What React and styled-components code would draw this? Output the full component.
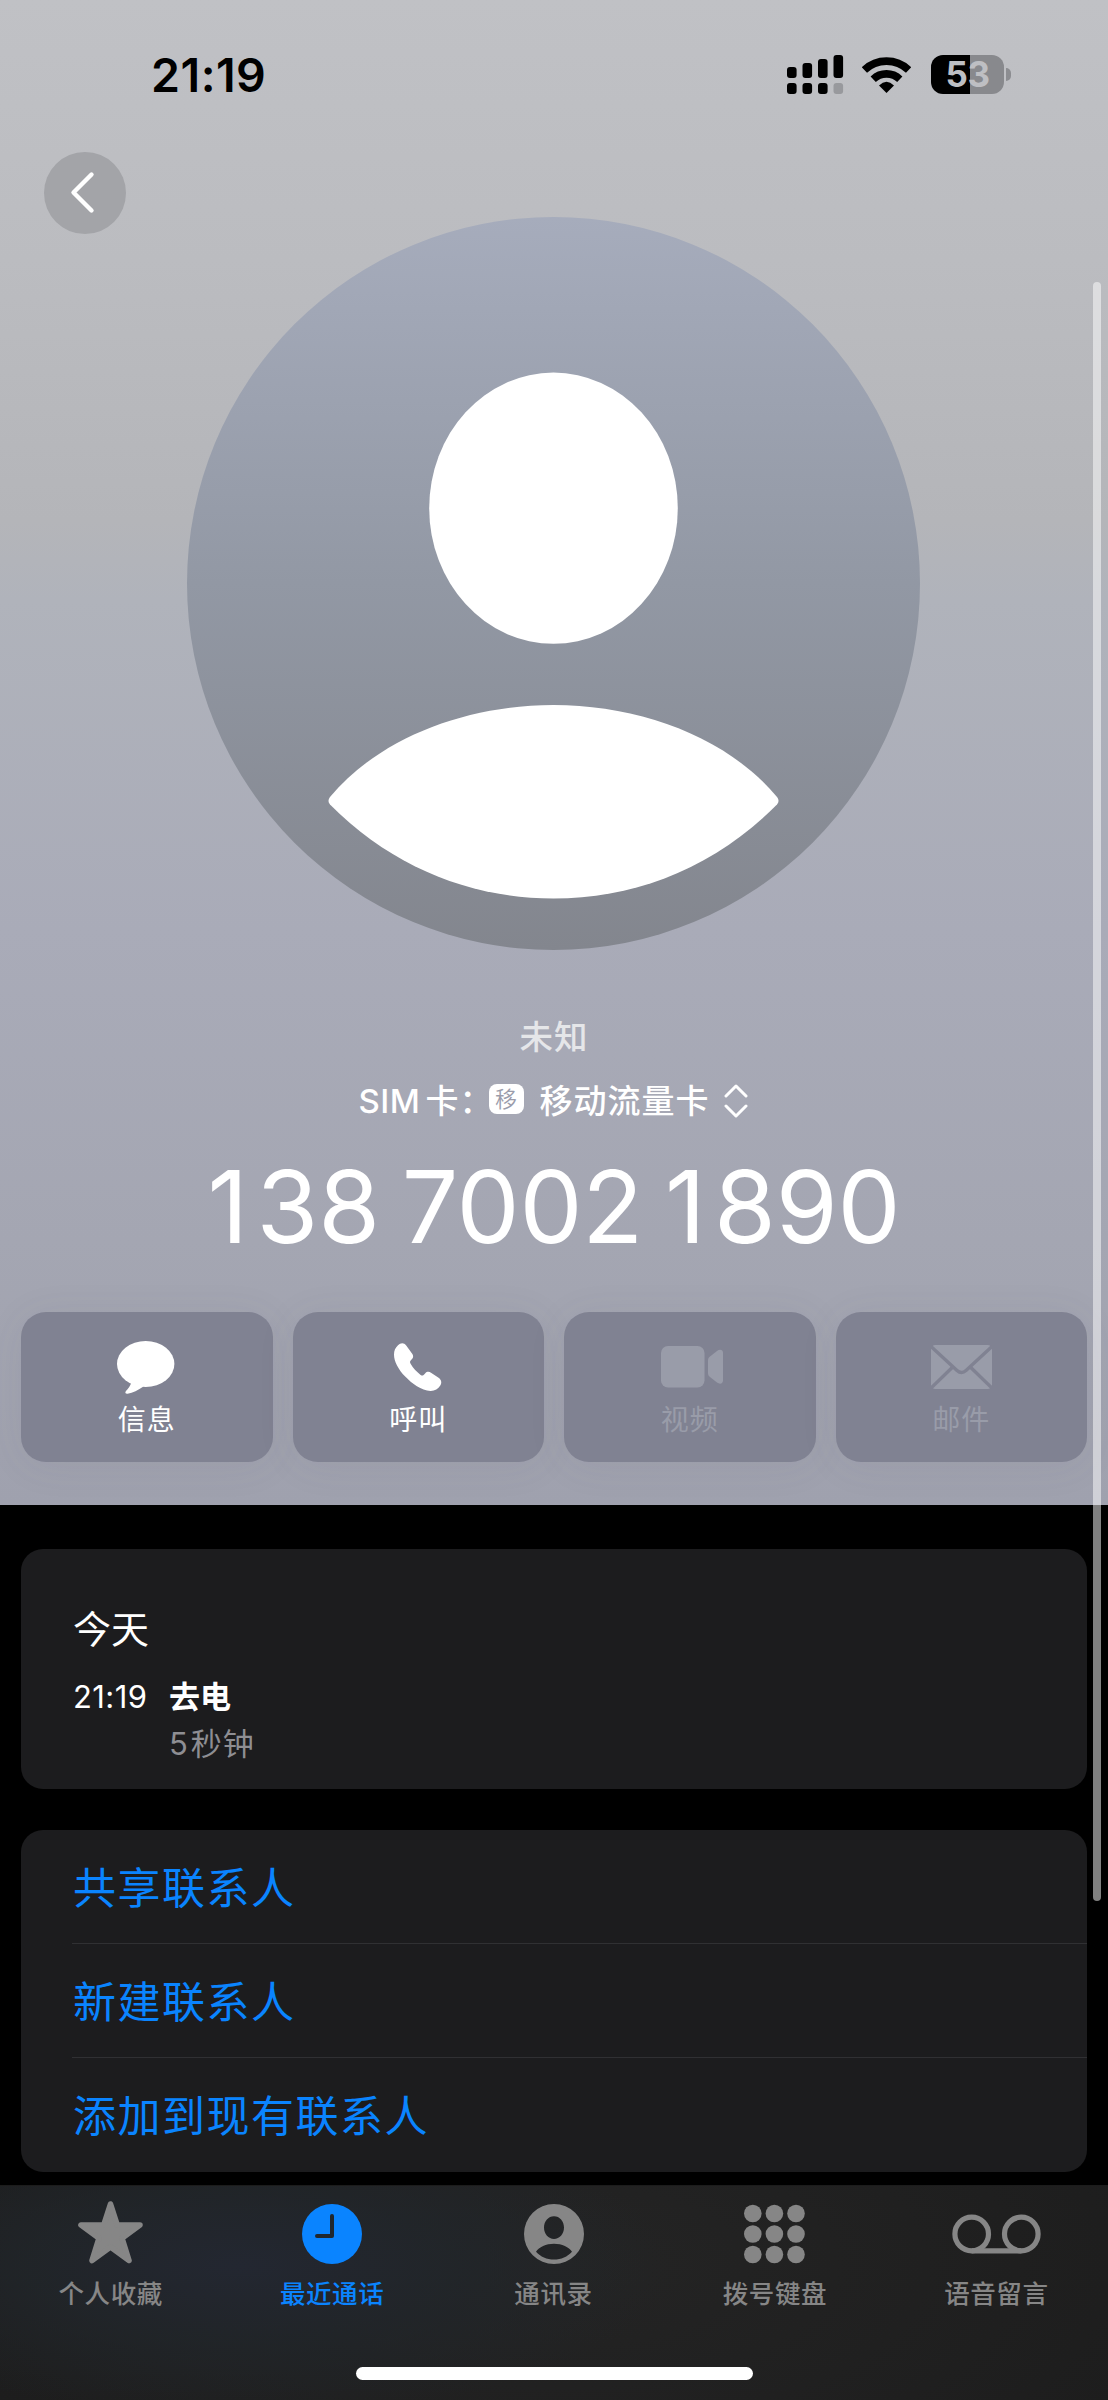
import React from 'react';
import styled, { createGlobalStyle } from 'styled-components';

const GlobalStyle = createGlobalStyle`
  * {
    box-sizing: border-box;
  }

  body {
    margin: 0;
    background: #000;
    font-family: Inter, 'Noto Sans CJK SC', sans-serif;
  }

  button {
    padding: 0;
    border: none;
    background: none;
    font-family: inherit;
    cursor: pointer;
  }

  svg {
    display: block;
    flex: none;
  }
`;

const Screen = styled.div`
  position: relative;
  display: flex;
  flex-direction: column;
  width: 1108px;
  height: 2400px;
  overflow: hidden;
  background: #000;
`;

const Hero = styled.header`
  display: flex;
  flex-direction: column;
  align-items: center;
  height: 1505px;
  background: linear-gradient(
    #c0c1c5 0px,
    #bbbcc0 260px,
    #b4b5b9 520px,
    #b0b3bb 600px,
    #a9abb8 930px,
    #a4a6b2 1240px,
    #9fa1ae 1505px
  );
`;

const StatusBar = styled.div`
  display: flex;
  justify-content: space-between;
  align-items: flex-start;
  width: 100%;
  height: 152px;
  padding: 54px 97px 0 151px;
`;

const Clock = styled.span`
  font-size: 46.5px;
  font-weight: 600;
  line-height: 42px;
  letter-spacing: 0.5px;
  color: #000;
`;

const StatusIcons = styled.div`
  display: flex;
  align-items: center;
  margin-top: 1px;
`;

const Battery = styled.div`
  display: flex;
  align-items: center;
  justify-content: center;
  width: 73px;
  height: 39px;
  margin-left: 20px;
  border-radius: 12px;
  background: linear-gradient(90deg, #000 53%, #88898d 53%);
  font-size: 35px;
  font-weight: 700;
  line-height: 39px;
  letter-spacing: -0.5px;
  color: #bebfc3;
`;

const BatteryCap = styled.span`
  width: 5px;
  height: 13px;
  margin-left: 2px;
  border-radius: 0 5px 5px 0;
  background: #8c8d91;
`;

const NavRow = styled.nav`
  display: flex;
  width: 100%;
  height: 82px;
  padding-left: 44px;
`;

const BackButton = styled.button`
  display: flex;
  align-items: center;
  justify-content: center;
  width: 82px;
  height: 82px;
  padding-right: 6px;
  border-radius: 50%;
  background: #a3a4a8;
`;

const Avatar = styled.div`
  width: 733px;
  height: 733px;
  margin: -17px 1px 0 0;
  border-radius: 50%;
  background: linear-gradient(#a6acbc, #9298a4 50%, #83868e);
`;

const Caption = styled.div`
  height: 40px;
  margin-top: 67px;
  font-size: 33.5px;
  font-weight: 500;
  line-height: 40px;
  letter-spacing: 1px;
  color: #e5e6e9;
`;

const SimRow = styled.div`
  display: flex;
  align-items: center;
  height: 40px;
  margin: 24px 2px 0 0;
  font-size: 33px;
  font-weight: 500;
  line-height: 40px;
  letter-spacing: 1px;
  color: #fff;
`;

const SimLabel = styled.span`
  width: 130px;
  white-space: nowrap;
`;

const SimPrefix = styled.span`
  margin-right: 5px;
  font-weight: 550;
  letter-spacing: 0.5px;
`;

const SimBadge = styled.span`
  display: flex;
  align-items: center;
  justify-content: center;
  width: 35px;
  height: 30px;
  margin: -4px 16px 0 0;
  border-radius: 8px;
  background: #fff;
  font-size: 22px;
  font-weight: 350;
  line-height: 30px;
  letter-spacing: 0;
  color: #9a9cab;
`;

const SimName = styled.span`
  width: 184px;
  white-space: nowrap;
`;

const PhoneNumber = styled.h1`
  height: 110px;
  margin: 31px 0 0;
  font-size: 100px;
  font-weight: 400;
  line-height: 110px;
  letter-spacing: -0.2px;
  word-spacing: -6px;
  white-space: nowrap;
  color: #fff;
`;

const One = styled.span`
  margin-right: 8.5px;
`;

const Actions = styled.div`
  display: flex;
  gap: 20px;
  width: 100%;
  margin-top: 50px;
  padding: 0 21px;
`;

const ActionButton = styled.button`
  display: flex;
  flex: 1;
  flex-direction: column;
  align-items: center;
  height: 150px;
  border-radius: 25px;
  background: #808292;
  box-shadow: 0 4px 40px rgba(80, 82, 100, 0.07);
  color: ${({ $disabled }) => ($disabled ? '#999ca9' : '#fff')};
`;

const ActionIcon = styled.span`
  display: flex;
  align-items: center;
  justify-content: center;
  height: 64px;
  margin-top: 23px;
`;

const ActionLabel = styled.span`
  margin-top: 1px;
  font-size: 28px;
  font-weight: 400;
  line-height: 40px;
  letter-spacing: 1px;
`;

const Content = styled.main`
  display: flex;
  flex-direction: column;
  gap: 41px;
  height: 680px;
  padding: 44px 21px 0;
`;

const Card = styled.section`
  border-radius: 22px;
  background: #1c1c1e;
  color: #fff;
`;

const HistoryCard = styled(Card)`
  height: 240px;
  padding: 55px 52px 0;
`;

const DayTitle = styled.h2`
  margin: 0;
  font-size: 38px;
  font-weight: 400;
  line-height: 50px;
`;

const CallGrid = styled.div`
  display: grid;
  grid-template-columns: 96px auto;
  margin-top: 19px;
  font-size: 31px;
  line-height: 47px;
`;

const CallTime = styled.span`
  letter-spacing: 0.4px;
`;

const CallType = styled.span`
  font-weight: 700;
`;

const CallDuration = styled.span`
  grid-column: 2;
  letter-spacing: 1px;
  color: #8e8e93;
`;

const Seconds = styled.span`
  margin-right: 2px;
`;

const LinkRow = styled.button`
  display: block;
  width: calc(100% - 51px);
  height: 114px;
  margin-left: 51px;
  padding: 2px 0 0 1px;
  border-bottom: ${({ $last }) => ($last ? 'none' : '1.5px solid #303033')};
  font-size: 43px;
  line-height: 110px;
  letter-spacing: 1.5px;
  text-align: left;
  color: #0a84ff;
`;

const ScrollThumb = styled.div`
  position: absolute;
  top: 282px;
  right: 7px;
  width: 8px;
  height: 1619px;
  border-radius: 4px;
  background: rgba(255, 255, 255, 0.5);
`;

const Footer = styled.footer`
  display: flex;
  flex-direction: column;
  align-items: center;
  height: 215px;
  border-top: 1px solid #1c1c1c;
  background: radial-gradient(
      ellipse 430px 150px at 240px 80px,
      #232731 0%,
      rgba(33, 38, 43, 0.75) 50%,
      rgba(33, 33, 33, 0) 100%
    ),
    radial-gradient(ellipse 640px 280px at 560px 80px, #242424, #1d1d1d);
`;

const Tabs = styled.div`
  display: flex;
  width: 100%;
  height: 181px;
  padding-right: 1px;
`;

const Tab = styled.button`
  display: flex;
  flex: 1;
  flex-direction: column;
  align-items: center;
  color: ${({ $active }) => ($active ? '#0a84ff' : '#868686')};
`;

const TabIcon = styled.span`
  display: flex;
  align-items: center;
  justify-content: center;
  height: 66px;
  margin-top: 15px;
`;

const TabLabel = styled.span`
  margin-top: 8px;
  font-size: 25.5px;
  font-weight: 500;
  line-height: 38px;
  letter-spacing: 0.6px;
`;

const HomeIndicator = styled.div`
  width: 397px;
  height: 13px;
  border-radius: 7px;
  background: #fff;
`;

const SignalIcon = () => (
  <svg width="57" height="39" viewBox="0 0 57 39" fill="#000">
    <rect x="0" y="12" width="9.6" height="11" rx="3" />
    <rect x="15.5" y="8" width="9.6" height="15" rx="3" />
    <rect x="31" y="4" width="9.6" height="19" rx="3" />
    <rect x="46.5" y="0" width="9.6" height="23" rx="3" />
    <rect x="0" y="28" width="9.6" height="11" rx="3" />
    <rect x="15.5" y="28" width="9.6" height="11" rx="3" />
    <rect x="31" y="28" width="9.6" height="11" rx="3" />
    <rect x="46.5" y="28" width="9.6" height="11" rx="3" fill="#98999d" />
  </svg>
);

const Wifi = styled.svg`
  margin-left: 18px;
`;

const WifiIcon = () => (
  <Wifi
    width="49"
    height="36"
    viewBox="0 0 49 36"
    fill="none"
    stroke="#000"
    strokeWidth="7.6"
  >
    <path d="M2.4 13 A32 32 0 0 1 46.6 13" />
    <path d="M11.2 22.2 A19.4 19.4 0 0 1 37.8 22.2" />
    <path d="M24.5 36 L17 28.4 Q24.5 21 32 28.4 Z" fill="#000" stroke="none" />
  </Wifi>
);

const BackIcon = () => (
  <svg width="30" height="44" viewBox="0 0 30 44" fill="none">
    <path
      d="M24.5 3.5 L6.5 21.5 L24.5 39.5"
      stroke="#fff"
      strokeWidth="4.4"
      strokeLinecap="round"
      strokeLinejoin="round"
    />
  </svg>
);

const PersonFigure = () => (
  <svg width="733" height="733" viewBox="0 0 733 733" fill="#fff">
    <ellipse cx="366.5" cy="291.2" rx="124.3" ry="135.6" />
    <path d="M143 580 C193 520 280 488 366.5 488 C453 488 540 520 590 580 C592 583 592 585 590 587.5 C527 651 448 681.5 366.5 681.5 C285 681.5 206 651 143 587.5 C141 585 141 583 143 580 Z" />
  </svg>
);

const SelectorIcon = () => (
  <svg
    width="24"
    height="36"
    viewBox="0 0 24 36"
    fill="none"
    stroke="#fff"
    strokeWidth="3"
    strokeLinecap="round"
    strokeLinejoin="round"
  >
    <path d="M2 13 L12 3 L22 13" />
    <path d="M2 23 L12 33 L22 23" />
  </svg>
);

const MessageIcon = () => (
  <svg width="59" height="53" viewBox="0 0 59 53" fill="currentColor">
    <ellipse cx="28.7" cy="23" rx="28.7" ry="23" />
    <path d="M14.5 41 C13.4 45 11 48 9 50 C7.6 51.6 8.6 53 10.6 52.7 C16 52 21 49 26.5 45.5 Z" />
  </svg>
);

const CallIcon = () => (
  <svg width="49" height="48" viewBox="0 0 49 48" fill="currentColor">
    <path d="M4 2.2 C6.5 -.4 10 -.6 12.2 2.4 L18.2 10.8 C19.6 12.8 19.3 14.6 18 16 C15.8 18.2 15.6 19 16.6 20.8 C19 25 23 29.3 26.6 31.9 C28.4 33.2 29.2 32.8 31.3 30.3 C32.8 28.6 35 28.4 37 29.7 L44.6 34.8 C47.6 36.9 47.9 40 46.3 42.6 C44.2 46 40.7 48 36.5 47.9 C27.5 47.7 17.8 40.6 11.2 33.6 C4.4 26.4 0 18.4 0 11.4 C0 7.6 1.4 4.6 4 2.2 Z" />
  </svg>
);

const VideoIcon = () => (
  <svg width="58" height="42" viewBox="0 0 58 42" fill="currentColor" overflow="visible">
    <rect x="0" y="0" width="43.5" height="41.5" rx="7" />
    <path d="M47 14.5 C47 12.6 47.8 11.6 49 10.6 L56 5 C59 2.8 62 4 62 7 V34.5 C62 37.5 59 38.7 56 36.5 L49 31 C47.8 30 47 29 47 27 Z" />
  </svg>
);

const MailIcon = () => (
  <svg width="61" height="44" viewBox="0 0 61 44" fill="currentColor">
    <rect x="0" y="0" width="61" height="44" rx="4.5" />
    <g fill="none" stroke="#808292" strokeWidth="3.4">
      <path d="M0 1.5 L26 25.5 Q30.5 29.5 35 25.5 L61 1.5" />
      <path d="M0 43 L22 21.8" />
      <path d="M61 43 L39 21.8" />
    </g>
  </svg>
);

const StarIcon = () => (
  <svg width="65" height="66" viewBox="0 0 65 66">
    <path
      d="M32.5 3 L39.3 24 L62 24 L44 37.2 L51 59.5 L32.5 46 L14 59.5 L21 37.2 L3 24 L25.7 24 Z"
      fill="currentColor"
      stroke="currentColor"
      strokeWidth="5.6"
      strokeLinejoin="round"
    />
  </svg>
);

const RecentIcon = () => (
  <svg width="60" height="60" viewBox="0 0 60 60">
    <circle cx="30" cy="30" r="30" fill="currentColor" />
    <path
      d="M30 12 V32 H15"
      fill="none"
      stroke="#20272e"
      strokeWidth="4"
      strokeLinecap="round"
      strokeLinejoin="round"
    />
  </svg>
);

const ContactIcon = () => (
  <svg width="60" height="60" viewBox="0 0 60 60">
    <path
      fill="currentColor"
      fillRule="evenodd"
      d="M30 0 A30 30 0 1 1 30 60 A30 30 0 1 1 30 0 Z M30 12.3 C24.3 12.3 20 17.2 20 23.6 C20 30.2 24.5 35 30 35 C35.5 35 40 30.2 40 23.6 C40 17.2 35.7 12.3 30 12.3 Z M30 39.7 C22 39.7 15 43 12 47.7 C16.5 52.7 22.8 55.6 30 55.6 C37.2 55.6 43.5 52.7 48 47.7 C45 43 38 39.7 30 39.7 Z"
    />
  </svg>
);

const KeypadIcon = () => (
  <svg width="61" height="60" viewBox="0 0 61 60" fill="currentColor">
    {[9.5, 30, 50.5].map((cy) =>
      [8.8, 30.4, 52].map((cx) => (
        <circle key={`${cx}-${cy}`} cx={cx} cy={cy} r="8.8" />
      ))
    )}
  </svg>
);

const VoicemailIcon = () => (
  <svg
    width="89"
    height="40"
    viewBox="0 0 89 40"
    fill="none"
    stroke="currentColor"
    strokeWidth="5.2"
  >
    <circle cx="19.7" cy="20" r="16.8" />
    <circle cx="69.3" cy="20" r="16.8" />
    <path d="M19.7 36.8 H69.3" />
  </svg>
);

const actions = [
  { label: '信息', icon: <MessageIcon /> },
  { label: '呼叫', icon: <CallIcon /> },
  { label: '视频', icon: <VideoIcon />, disabled: true },
  { label: '邮件', icon: <MailIcon />, disabled: true },
];

const links = ['共享联系人', '新建联系人', '添加到现有联系人'];

const tabs = [
  { label: '个人收藏', icon: <StarIcon /> },
  { label: '最近通话', icon: <RecentIcon />, active: true },
  { label: '通讯录', icon: <ContactIcon /> },
  { label: '拨号键盘', icon: <KeypadIcon /> },
  { label: '语音留言', icon: <VoicemailIcon /> },
];

const App = () => {
  return (
    <Screen lang="zh-CN">
      <GlobalStyle />
      <Hero>
        <StatusBar>
          <Clock>21:19</Clock>
          <StatusIcons>
            <SignalIcon />
            <WifiIcon />
            <Battery>53</Battery>
            <BatteryCap />
          </StatusIcons>
        </StatusBar>
        <NavRow>
          <BackButton type="button">
            <BackIcon />
          </BackButton>
        </NavRow>
        <Avatar>
          <PersonFigure />
        </Avatar>
        <Caption>未知</Caption>
        <SimRow>
          <SimLabel>
            <SimPrefix>SIM</SimPrefix>卡：
          </SimLabel>
          <SimBadge>移</SimBadge>
          <SimName>移动流量卡</SimName>
          <SelectorIcon />
        </SimRow>
        <PhoneNumber>
          <One>1</One>38 7002 <One>1</One>890
        </PhoneNumber>
        <Actions>
          {actions.map(({ label, icon, disabled }) => (
            <ActionButton type="button" key={label} $disabled={disabled}>
              <ActionIcon>{icon}</ActionIcon>
              <ActionLabel>{label}</ActionLabel>
            </ActionButton>
          ))}
        </Actions>
      </Hero>
      <Content>
        <HistoryCard>
          <DayTitle>今天</DayTitle>
          <CallGrid>
            <CallTime>21:19</CallTime>
            <CallType>去电</CallType>
            <CallDuration>
              <Seconds>5</Seconds>秒钟
            </CallDuration>
          </CallGrid>
        </HistoryCard>
        <Card>
          {links.map((label, index) => (
            <LinkRow
              type="button"
              key={label}
              $last={index === links.length - 1}
            >
              {label}
            </LinkRow>
          ))}
        </Card>
      </Content>
      <Footer>
        <Tabs>
          {tabs.map(({ label, icon, active }) => (
            <Tab type="button" key={label} $active={active}>
              <TabIcon>{icon}</TabIcon>
              <TabLabel>{label}</TabLabel>
            </Tab>
          ))}
        </Tabs>
        <HomeIndicator />
      </Footer>
      <ScrollThumb />
    </Screen>
  );
};

export default App;
